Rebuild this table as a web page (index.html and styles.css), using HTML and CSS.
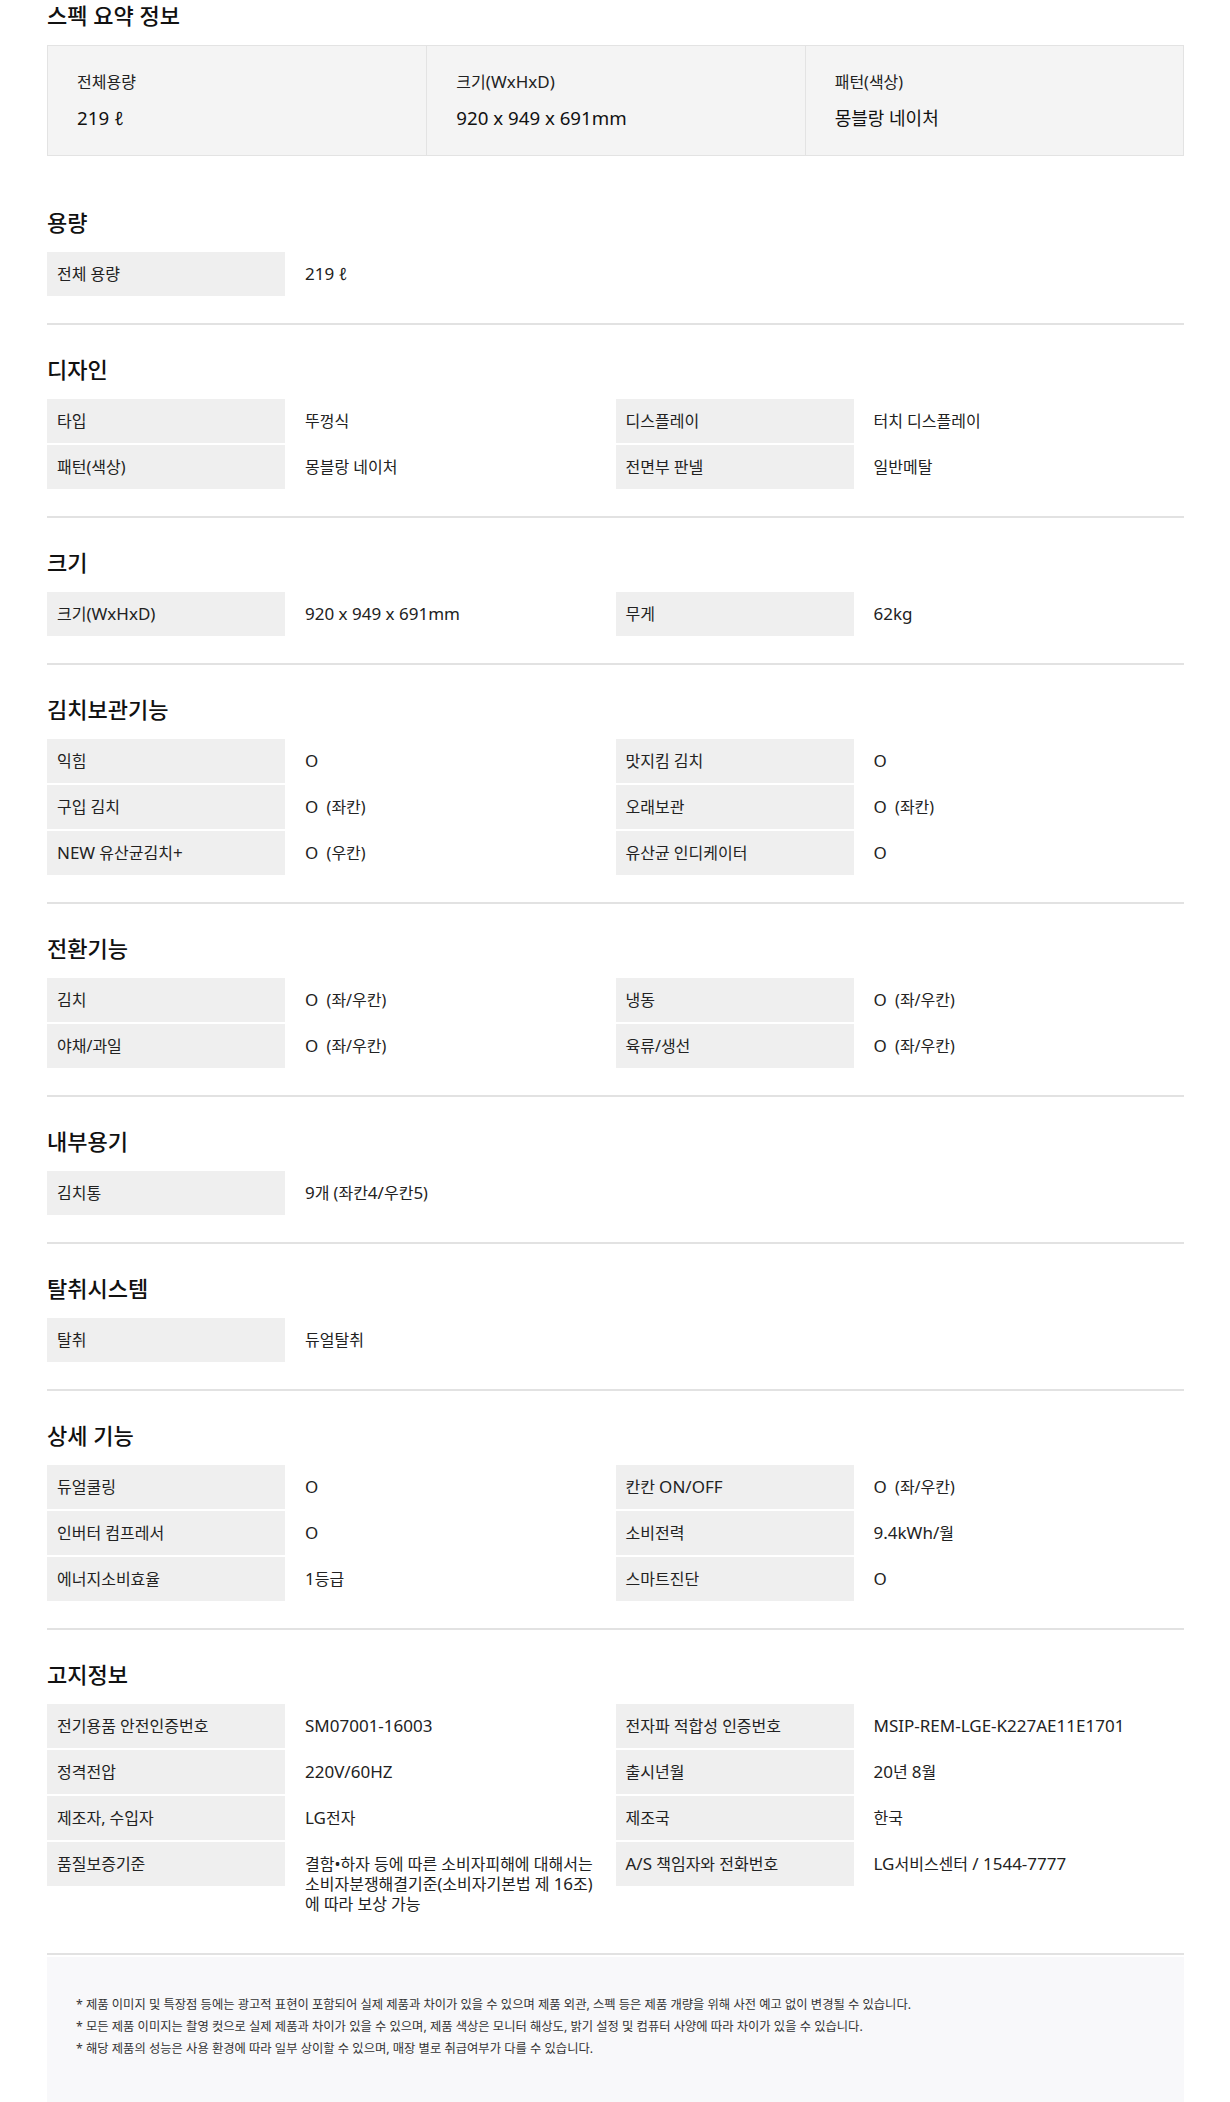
FILE: index.html
```html
<!DOCTYPE html>
<html lang="ko">
<head>
<meta charset="utf-8">
<title>스펙 요약 정보</title>
<link rel="stylesheet" href="styles.css">
</head>
<body>
<div class="page">
  <div class="summary">
    <h2 class="title">스펙 요약 정보</h2>
    <div class="sum-box">
      <div class="sum-cell">
        <div class="sum-label">전체용량</div>
        <div class="sum-value"><span class="en">219 ℓ</span></div>
      </div>
      <div class="sum-cell">
        <div class="sum-label">크기<span class="en">(WxHxD)</span></div>
        <div class="sum-value"><span class="en">920 x 949 x 691mm</span></div>
      </div>
      <div class="sum-cell">
        <div class="sum-label">패턴(색상)</div>
        <div class="sum-value">몽블랑 네이처</div>
      </div>
    </div>
  </div>

  <section class="section first">
    <h3 class="title">용량</h3>
    <div class="grid">
      <div class="lbl">전체 용량</div><div class="val"><span class="en">219 ℓ</span></div>
    </div>
  </section>

  <section class="section">
    <h3 class="title">디자인</h3>
    <div class="grid">
      <div class="lbl">타입</div><div class="val">뚜껑식</div>
      <div class="lbl">디스플레이</div><div class="val">터치 디스플레이</div>
      <div class="lbl">패턴(색상)</div><div class="val">몽블랑 네이처</div>
      <div class="lbl">전면부 판넬</div><div class="val">일반메탈</div>
    </div>
  </section>

  <section class="section">
    <h3 class="title">크기</h3>
    <div class="grid">
      <div class="lbl">크기<span class="en">(WxHxD)</span></div><div class="val"><span class="en">920 x 949 x 691mm</span></div>
      <div class="lbl">무게</div><div class="val"><span class="en">62kg</span></div>
    </div>
  </section>

  <section class="section">
    <h3 class="title">김치보관기능</h3>
    <div class="grid">
      <div class="lbl">익힘</div><div class="val"><span class="en">O</span></div>
      <div class="lbl">맛지킴 김치</div><div class="val"><span class="en">O</span></div>
      <div class="lbl">구입 김치</div><div class="val"><span class="en">O</span>&nbsp; (좌칸)</div>
      <div class="lbl">오래보관</div><div class="val"><span class="en">O</span>&nbsp; (좌칸)</div>
      <div class="lbl"><span class="en">NEW</span> 유산균김치<span class="en">+</span></div><div class="val"><span class="en">O</span>&nbsp; (우칸)</div>
      <div class="lbl">유산균 인디케이터</div><div class="val"><span class="en">O</span></div>
    </div>
  </section>

  <section class="section">
    <h3 class="title">전환기능</h3>
    <div class="grid">
      <div class="lbl">김치</div><div class="val"><span class="en">O</span>&nbsp; (좌/우칸)</div>
      <div class="lbl">냉동</div><div class="val"><span class="en">O</span>&nbsp; (좌/우칸)</div>
      <div class="lbl">야채/과일</div><div class="val"><span class="en">O</span>&nbsp; (좌/우칸)</div>
      <div class="lbl">육류/생선</div><div class="val"><span class="en">O</span>&nbsp; (좌/우칸)</div>
    </div>
  </section>

  <section class="section">
    <h3 class="title">내부용기</h3>
    <div class="grid">
      <div class="lbl">김치통</div><div class="val"><span class="en">9</span>개 (좌칸<span class="en">4/</span>우칸<span class="en">5</span>)</div>
    </div>
  </section>

  <section class="section">
    <h3 class="title">탈취시스템</h3>
    <div class="grid">
      <div class="lbl">탈취</div><div class="val">듀얼탈취</div>
    </div>
  </section>

  <section class="section">
    <h3 class="title">상세 기능</h3>
    <div class="grid">
      <div class="lbl">듀얼쿨링</div><div class="val"><span class="en">O</span></div>
      <div class="lbl">칸칸 <span class="en">ON/OFF</span></div><div class="val"><span class="en">O</span>&nbsp; (좌/우칸)</div>
      <div class="lbl">인버터 컴프레서</div><div class="val"><span class="en">O</span></div>
      <div class="lbl">소비전력</div><div class="val"><span class="en">9.4kWh/</span>월</div>
      <div class="lbl">에너지소비효율</div><div class="val"><span class="en">1</span>등급</div>
      <div class="lbl">스마트진단</div><div class="val"><span class="en">O</span></div>
    </div>
  </section>

  <section class="section">
    <h3 class="title">고지정보</h3>
    <div class="grid">
      <div class="lbl">전기용품 안전인증번호</div><div class="val"><span class="en">SM07001-16003</span></div>
      <div class="lbl">전자파 적합성 인증번호</div><div class="val"><span class="en">MSIP-REM-LGE-K227AE11E1701</span></div>
      <div class="lbl">정격전압</div><div class="val"><span class="en">220V/60HZ</span></div>
      <div class="lbl">출시년월</div><div class="val"><span class="en">20</span>년 <span class="en">8</span>월</div>
      <div class="lbl">제조자, 수입자</div><div class="val"><span class="en">LG</span>전자</div>
      <div class="lbl">제조국</div><div class="val">한국</div>
      <div class="lbl">품질보증기준</div><div class="val">결함•하자 등에 따른 소비자피해에 대해서는<br>소비자분쟁해결기준(소비자기본법 제 <span class="en">16</span>조)<br>에 따라 보상 가능</div>
      <div class="lbl"><span class="en">A/S</span> 책임자와 전화번호</div><div class="val"><span class="en">LG</span>서비스센터 <span class="en">/ 1544-7777</span></div>
    </div>
  </section>

  <div class="notice-wrap">
    <ul class="notice">
      <li>* 제품 이미지 및 특장점 등에는 광고적 표현이 포함되어 실제 제품과 차이가 있을 수 있으며 제품 외관, 스펙 등은 제품 개량을 위해 사전 예고 없이 변경될 수 있습니다.</li>
      <li>* 모든 제품 이미지는 촬영 컷으로 실제 제품과 차이가 있을 수 있으며, 제품 색상은 모니터 해상도, 밝기 설정 및 컴퓨터 사양에 따라 차이가 있을 수 있습니다.</li>
      <li>* 해당 제품의 성능은 사용 환경에 따라 일부 상이할 수 있으며, 매장 별로 취급여부가 다를 수 있습니다.</li>
    </ul>
  </div>
</div>
</body>
</html>
```

FILE: styles.css
```css
* { box-sizing: border-box; }

html, body {
  margin: 0;
  padding: 0;
  background: #ffffff;
}

body {
  font-family: "Noto Sans", "Noto Sans CJK KR", sans-serif;
  font-size: 16px;
  color: #222222;
}

.page {
  padding: 0 46px 0 47px;
}

.en {
  font-size: 17px;
  line-height: 1;
}

.title {
  margin: 0 0 15px 0;
  font-size: 22px;
  line-height: 30px;
  font-weight: 500;
  color: #111111;
}

/* summary */
.summary {
  margin-bottom: 20px;
}

.summary .title {
  margin: 0 0 15px 0;
}

.sum-box {
  display: grid;
  grid-template-columns: 1fr 1fr 1fr;
  background: #f4f4f4;
  border: 1px solid #e3e3e3;
}

.sum-cell {
  padding: 26px 29px 25px;
}

.sum-cell + .sum-cell {
  border-left: 1px solid #e3e3e3;
}

.sum-label {
  font-size: 16px;
  line-height: 20px;
  height: 20px;
  margin-bottom: 14px;
  color: #222222;
}

.sum-value {
  font-size: 18px;
  line-height: 24px;
  height: 24px;
  color: #111111;
}

.sum-value .en {
  font-size: 18.7px;
}

/* sections */
.section {
  border-top: 2px solid #e2e2e2;
  padding: 29px 0 27px;
}

.section.first {
  border-top-color: transparent;
}

.grid {
  display: grid;
  grid-template-columns: 238px 1fr 238px 1fr;
  row-gap: 2px;
  align-items: start;
}

.lbl {
  background: #efefef;
  height: 44px;
  padding: 12px 10px;
  line-height: 20px;
  white-space: nowrap;
}

.val {
  padding: 12px 10px 12px 20px;
  line-height: 20px;
  min-height: 44px;
  word-break: keep-all;
}

/* notice */
.notice-wrap {
  border-top: 2px solid #e2e2e2;
  padding-top: 2px;
}

.notice {
  list-style: none;
  margin: 0;
  background: #f8f8fa;
  padding: 37px 20px 42px 29px;
  font-size: 12.3px;
  line-height: 22px;
  color: #333333;
}

.notice li {
  margin: 0;
}
```
